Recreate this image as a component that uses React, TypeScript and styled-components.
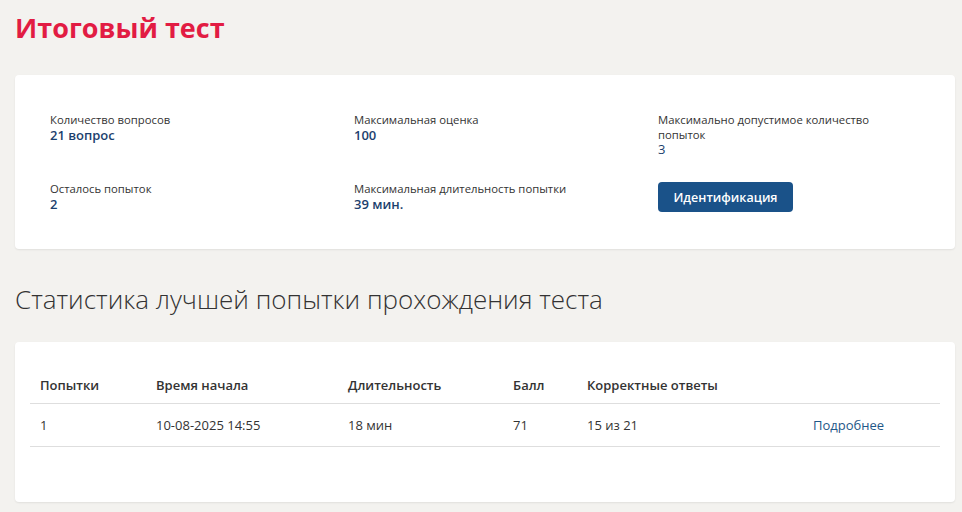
import styled, { createGlobalStyle } from "styled-components";

const GlobalStyle = createGlobalStyle`
  html, body {
    margin: 0;
    padding: 0;
    background: #f3f2ef;
  }
  body {
    font-family: "Open Sans", "Noto Sans", sans-serif;
    color: #333333;
  }
`;

const Page = styled.div`
  padding: 12px 7px 10px 15px;
  display: flex;
  flex-direction: column;
`;

const Title = styled.h1`
  margin: 0;
  font-size: 27px;
  line-height: 32px;
  font-weight: 700;
  color: #e21c43;
`;

const Card = styled.section<{ $kind: "info" | "table" }>`
  margin-top: ${(p) => (p.$kind === "info" ? "31px" : "26px")};
  background: #ffffff;
  border-radius: 4px;
  box-shadow: 0 1px 2px rgba(0, 0, 0, 0.08);
  padding: ${(p) => (p.$kind === "info" ? "38px 0 37px 35px" : "24px 15px 55px 15px")};
`;

const InfoGrid = styled.div`
  display: grid;
  grid-template-columns: 304px 304px 1fr;
  row-gap: 25px;
  align-items: start;
`;

const Item = styled.div`
  display: flex;
  flex-direction: column;
  max-width: 230px;
`;

const Label = styled.span`
  font-size: 11.3px;
  line-height: 14.5px;
  color: #333333;
`;

const Value = styled.span<{ $plain?: boolean }>`
  font-size: 13px;
  line-height: 15px;
  font-weight: ${(p) => (p.$plain ? 400 : 600)};
  color: #1c3f6e;
`;

const Button = styled.button`
  width: 135px;
  height: 30px;
  border: none;
  border-radius: 4px;
  background: #1a5289;
  color: #ffffff;
  font-family: "Open Sans", sans-serif;
  font-size: 12.5px;
  font-weight: 600;
  cursor: pointer;
`;

const Subtitle = styled.h2`
  margin: 33px 0 0 0;
  font-size: 26px;
  line-height: 34px;
  font-weight: 300;
  color: #333333;
`;

const Table = styled.table`
  width: 100%;
  table-layout: fixed;
  border-collapse: collapse;
  font-size: 13px;
`;

const Th = styled.th<{ $w?: number }>`
  box-sizing: border-box;
  text-align: left;
  font-weight: 600;
  padding: 10px 10px 9px 10px;
  height: 37px;
  border-bottom: 1px solid #dedede;
  width: ${(p) => (p.$w ? `${p.$w}px` : "auto")};
`;

const Td = styled.td`
  padding: 12px 10px 12px 10px;
  height: 18px;
  border-bottom: 1px solid #dedede;
  white-space: nowrap;
`;

const Link = styled.a`
  color: #1f5788;
  text-decoration: none;
`;

const info = [
  { label: "Количество вопросов", value: "21 вопрос" },
  { label: "Максимальная оценка", value: "100" },
  { label: "Максимально допустимое количество попыток", value: "3", plain: true },
  { label: "Осталось попыток", value: "2" },
  { label: "Максимальная длительность попытки", value: "39 мин." },
];

function App() {
  return (
    <>
      <GlobalStyle />
      <Page>
        <Title>Итоговый тест</Title>
        <Card $kind="info">
          <InfoGrid>
            {info.map((i) => (
              <Item key={i.label}>
                <Label>{i.label}</Label>
                <Value $plain={i.plain}>{i.value}</Value>
              </Item>
            ))}
            <div>
              <Button>Идентификация</Button>
            </div>
          </InfoGrid>
        </Card>
        <Subtitle>Статистика лучшей попытки прохождения теста</Subtitle>
        <Card $kind="table">
          <Table>
            <thead>
              <tr>
                <Th $w={116}>Попытки</Th>
                <Th $w={192}>Время начала</Th>
                <Th $w={165}>Длительность</Th>
                <Th $w={74}>Балл</Th>
                <Th $w={226}>Корректные ответы</Th>
                <Th></Th>
              </tr>
            </thead>
            <tbody>
              <tr>
                <Td>1</Td>
                <Td>10-08-2025 14:55</Td>
                <Td>18 мин</Td>
                <Td>71</Td>
                <Td>15 из 21</Td>
                <Td>
                  <Link href="#">Подробнее</Link>
                </Td>
              </tr>
            </tbody>
          </Table>
        </Card>
      </Page>
    </>
  );
}

export default App;
